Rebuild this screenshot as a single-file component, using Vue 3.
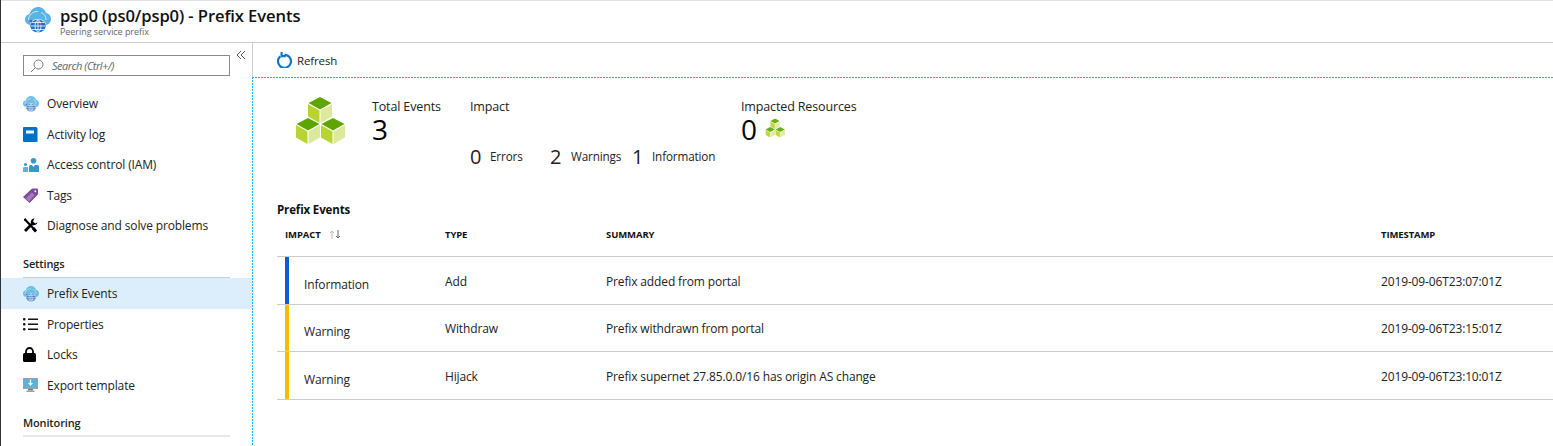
<script setup>
const navTop = [
  { label: 'Overview', icon: 'globe' },
  { label: 'Activity log', icon: 'log' },
  { label: 'Access control (IAM)', icon: 'iam' },
  { label: 'Tags', icon: 'tag' },
  { label: 'Diagnose and solve problems', icon: 'tools' },
]
const navSettings = [
  { label: 'Prefix Events', icon: 'globe', active: true },
  { label: 'Properties', icon: 'props' },
  { label: 'Locks', icon: 'lock' },
  { label: 'Export template', icon: 'export' },
]
const rows = [
  { impact: 'Information', color: '#0a5fd6', type: 'Add', summary: 'Prefix added from portal', ts: '2019-09-06T23:07:01Z' },
  { impact: 'Warning', color: '#ffb900', type: 'Withdraw', summary: 'Prefix withdrawn from portal', ts: '2019-09-06T23:15:01Z' },
  { impact: 'Warning', color: '#ffb900', type: 'Hijack', summary: 'Prefix supernet 27.85.0.0/16 has origin AS change', ts: '2019-09-06T23:10:01Z' },
]
const cubes = [[13, 1], [1, 22], [26, 22]]
</script>

<template>
  <div class="page">
    <svg width="0" height="0" class="defs">
      <symbol id="cube" viewBox="0 0 24 26">
        <path d="M12 0L23.500 6L12 12.500L0.500 6Z" fill="#5ea500" />
        <path d="M0 7L11.500 13.500V26L0 19.500Z" fill="#b8d432" />
        <path d="M24 7L12.500 13.500V26L24 19.500Z" fill="#dde99a" />
      </symbol>
      <symbol id="globe" viewBox="0 0 26 26">
        <path d="M6 18C2.500 18 0 15.500 0 12.500C0 9.500 2 7.500 4.500 7C5.500 3 9 0 13 0C17 0 20 2.500 21 6C24 6.300 26 9 26 12C26 15.500 23.500 18 20 18Z" fill="#59b4e3" />
        <path d="M3.500 13C3.500 8 8 4 13 4.500" stroke="#d4edfa" stroke-width="0.900" fill="none" />
        <path d="M21 13C21 9 19 6.500 16 5.500" stroke="#d4edfa" stroke-width="0.900" fill="none" />
        <ellipse cx="13" cy="19" rx="8.500" ry="7" fill="#fff" />
        <ellipse cx="13" cy="19" rx="7.800" ry="6.400" fill="#1f72c4" />
        <path d="M5.500 19H20.500M13 12.500V25.500M7 15.500H19M7 22.500H19M13 12.500C9 15 9 23 13 25.500M13 12.500C17 15 17 23 13 25.500" stroke="#fff" stroke-width="0.800" fill="none" />
        <circle cx="6" cy="14" r="1.300" fill="#a23d9c" />
        <circle cx="16.500" cy="17" r="1.300" fill="#a23d9c" />
      </symbol>
    </svg>

    <header class="topbar">
      <svg class="res-icon" width="26" height="26"><use href="#globe" /></svg>
      <div class="titles">
        <h1>psp0 (ps0/psp0) - Prefix Events</h1>
        <p>Peering service prefix</p>
      </div>
    </header>

    <div class="body">
      <aside class="side">
        <div class="search-row">
          <div class="search">
            <svg width="14" height="14" viewBox="0 0 14 14" fill="none" stroke="#777" stroke-width="1"><circle cx="8.500" cy="5.500" r="4.500" /><path d="M5.200 8.800L1 13" /></svg>
            <span>Search (Ctrl+/)</span>
          </div>
          <svg class="collapse" width="10" height="10" viewBox="0 0 10 10" fill="none" stroke="#555" stroke-width="1"><path d="M5 1L1 5L5 9M9 1L5 5L9 9" /></svg>
        </div>

        <template v-for="(group, gi) in [navTop, navSettings]" :key="gi">
          <div v-if="gi === 1" class="heading">Settings</div>
          <div v-for="item in group" :key="item.label" class="nav" :class="{ active: item.active, lower: gi === 1 }">
            <span class="nav-icon">
              <svg v-if="item.icon === 'globe'" class="soft" width="16" height="16"><use href="#globe" /></svg>
              <svg v-else-if="item.icon === 'log'" width="15" height="15" viewBox="0 0 15 15"><rect width="14" height="15" rx="1" fill="#0072c6" /><rect x="14" y="1" width="1" height="14" fill="#7ab8e6" /><rect x="3" y="3.500" width="8" height="3" fill="#fff" /></svg>
              <svg v-else-if="item.icon === 'iam'" width="16" height="14" viewBox="0 0 16 14"><circle cx="10.500" cy="2.800" r="2.800" fill="#3999c6" /><path d="M6 14V8.500Q6 7 7.500 7H9L10.500 9L12 7H14.500Q16 7 16 8.500V14Z" fill="#3999c6" /><circle cx="2.500" cy="6.500" r="1.600" fill="#3999c6" /><path d="M0 14V10Q0 9 1.500 9H5V14Z" fill="#59b4d9" /></svg>
              <svg v-else-if="item.icon === 'tag'" width="15" height="15" viewBox="0 0 15 15"><path d="M0 9L8 1.500Q9 0.500 10 0.500H14Q15 0.500 15 1.500V5.500Q15 6.500 14 7.500L6.500 15Z" fill="#7f4a9b" /><path d="M2.500 10.500L9 4.500L11.500 7L6 13.500Z" fill="#a67bb8" /><circle cx="12.300" cy="3.200" r="1" fill="#fff" /></svg>
              <svg v-else-if="item.icon === 'tools'" width="15" height="15" viewBox="0 0 15 15" fill="none"><path d="M1.500 1L12.800 13" stroke="#000" stroke-width="2" /><path d="M10 10L13 13.500" stroke="#000" stroke-width="3" /><path d="M1 1L3 0.500L3.500 2.500L1.500 3Z" fill="#000" /><path d="M2 13L9 6" stroke="#000" stroke-width="2.800" /><path d="M10.500 0.500A3.800 3.800 0 0 0 8 5.500L9.500 7A3.800 3.800 0 0 0 14.500 4.300L12.300 5.500L10 3.500L11.500 0.500Z" fill="#000" /></svg>
              <svg v-else-if="item.icon === 'props'" width="15" height="13" viewBox="0 0 15 13" fill="#111"><rect y="0" width="2.500" height="2.500" rx="1" /><rect y="5" width="2.500" height="2.500" rx="1" /><rect y="10" width="2.500" height="2.500" rx="1" /><rect x="5" y="0.500" width="10" height="1.500" /><rect x="5" y="5.500" width="10" height="1.500" /><rect x="5" y="10.500" width="10" height="1.500" /></svg>
              <svg v-else-if="item.icon === 'lock'" width="13" height="15" viewBox="0 0 13 15"><path d="M3 7V4.500A3.500 3.500 0 0 1 10 4.500V7" fill="none" stroke="#000" stroke-width="1.800" /><rect y="6" width="13" height="9" rx="1.500" fill="#000" /></svg>
              <svg v-else-if="item.icon === 'export'" width="15" height="14" viewBox="0 0 15 14"><rect width="15" height="11" fill="#a0a1a2" /><rect x="1" y="1" width="13" height="8.500" fill="#59b4d9" /><rect x="5" y="11" width="5" height="1.500" fill="#7a7a7a" /><rect x="3.500" y="12.500" width="8" height="1.500" fill="#a0a1a2" /><path d="M6.800 1.500H8.200V5H10L7.500 8L5 5H6.800Z" fill="#fff" /></svg>
            </span>
            <span>{{ item.label }}</span>
          </div>
        </template>

        <div class="heading last">Monitoring</div>
      </aside>

      <main class="main">
        <div class="cmdbar">
          <svg width="16" height="16" viewBox="0 0 16 16" fill="none"><path d="M3.300 4.300A6.500 6.500 0 1 0 7.500 2.800" stroke="#0f77c8" stroke-width="2.200" /><path d="M3.500 0H5.700V3H8.700V5.200H3.500Z" fill="#0f77c8" /></svg>
          <span>Refresh</span>
        </div>

        <section class="content">
          <div class="stats">
            <svg class="hero" width="50" height="49" viewBox="0 0 50 49">
              <use v-for="(c, i) in cubes" :key="i" href="#cube" :x="c[0]" :y="c[1]" width="24" height="26" />
            </svg>
            <div class="stat total">
              <div>Total Events</div>
              <div class="big">3</div>
            </div>
            <div class="stat impact">
              <div>Impact</div>
              <div class="counts">
                <span class="num">0</span><span class="lab errs">Errors</span>
                <span class="num wide">2</span><span class="lab warns">Warnings</span>
                <span class="num">1</span><span class="lab">Information</span>
              </div>
            </div>
            <div class="stat res">
              <div>Impacted Resources</div>
              <div class="res-val">
                <span class="big">0</span>
                <svg class="res-cubes" width="20" height="20" viewBox="0 0 50 49">
                  <use v-for="(c, i) in cubes" :key="i" href="#cube" :x="c[0]" :y="c[1]" width="24" height="26" />
                </svg>
              </div>
            </div>
          </div>

          <h2>Prefix Events</h2>
          <div class="table">
            <div class="thead">
              <span class="impact-h">IMPACT
                <svg width="12" height="9" viewBox="0 0 12 9" fill="none"><path d="M3 9V1M1 3L3 1L5 3" stroke="#bbb" /><path d="M9 0V8M7 6L9 8L11 6" stroke="#666" /></svg>
              </span>
              <span>TYPE</span>
              <span>SUMMARY</span>
              <span>TIMESTAMP</span>
            </div>
            <div v-for="r in rows" :key="r.ts" class="row">
              <span class="impact-c">
                <i class="bar" :style="{ background: r.color }"></i>
                <span class="impact-t">{{ r.impact }}</span>
              </span>
              <span class="cell">{{ r.type }}</span>
              <span class="cell">{{ r.summary }}</span>
              <span class="cell">{{ r.ts }}</span>
            </div>
          </div>
        </section>
      </main>
    </div>
  </div>
</template>

<style>
html, body { margin: 0; background: #fff; overflow: hidden; }
</style>

<style scoped>
.page {
  width: 1553px;
  height: 446px;
  box-sizing: border-box;
  overflow: hidden;
  font-family: "Open Sans", "Noto Sans", sans-serif;
  font-size: 12px;
  letter-spacing: -0.14px;
  color: #222;
  background: #fff;
  border-left: 1px solid #333;
}
.defs { position: absolute; }
.topbar {
  height: 41px;
  border-top: 1px solid #e2e2e2;
  border-bottom: 1px solid #ccc;
  display: flex;
  align-items: center;
  padding-left: 24px;
  gap: 9px;
}
.res-icon { flex: none; margin-top: -3px; }
h1 {
  margin: 0;
  font-size: 16.600px;
  line-height: 20px;
  font-weight: 600;
  color: #111;
  letter-spacing: -0.1px;
}
.titles p { margin: 0; font-size: 9px; line-height: 11px; color: #666; letter-spacing: -0.05px; }
.body { display: flex; height: 403px; }
.side {
  width: 251px;
  flex: none;
  padding-top: 12px;
}
.search-row { display: flex; align-items: flex-start; height: 21px; margin-bottom: 12.500px; padding-left: 22px; }
.search {
  width: 199px;
  height: 19px;
  border: 1px solid #8a8a8a;
  display: flex;
  align-items: center;
  gap: 8px;
  padding-left: 6px;
  font-style: italic;
  color: #666;
  font-size: 11px;
  letter-spacing: -0.5px;
}
.collapse { margin-left: 6px; margin-top: -5px; }
.nav {
  height: 30.500px;
  display: flex;
  align-items: center;
  color: #222;
  padding-left: 22px;
}
.nav.lower { box-sizing: border-box; padding-top: 1px; }
.nav.active { background: #dceefc; }
.nav-icon { width: 24px; display: flex; align-items: center; justify-content: flex-start; }
.soft { opacity: 0.85; }
.heading {
  margin: 13px 22px 0;
  width: 207px;
  height: 23px;
  border-bottom: 1px solid #ccc;
  line-height: 20px;
  font-weight: 600;
  font-size: 11px;
}
.heading.last { margin-top: 13px; border-bottom: 2px solid #e8e8e8; height: 22px; }
.main { flex: 1; min-width: 0; border-left: 1px solid #ccc; }
.cmdbar {
  height: 34px;
  box-sizing: border-box;
  display: flex;
  align-items: center;
  gap: 4px;
  padding-left: 24px;
  font-size: 11.500px;
}
.content {
  height: 369px;
  box-sizing: border-box;
  margin-left: -1px;
  padding: 1px 0 0 25px;
  background-color: #fff;
  background-image:
    repeating-linear-gradient(90deg, #19b5f1 0 2px, transparent 2px 3px),
    repeating-linear-gradient(180deg, #19b5f1 0 2px, transparent 2px 3px);
  background-size: 100% 1px, 1px 100%;
  background-position: 0 0, 0 0;
  background-repeat: no-repeat;
}
.stats { display: flex; height: 118px; padding-top: 18px; box-sizing: border-box; }
.hero { margin-left: 18px; flex: none; }
.stat { line-height: 17px; font-size: 12.500px; padding-top: 2px; }
.total { margin-left: 27px; width: 98px; }
.big { font-size: 28px; line-height: 28px; color: #000; letter-spacing: 0; }
.impact { width: 271px; }
.counts { display: flex; align-items: center; margin-top: 31px; height: 20px; }
.num { font-size: 20px; color: #222; width: 20px; letter-spacing: 0; }
.num.wide { width: 21px; }
.lab { font-size: 11.700px; }
.errs { width: 60px; }
.warns { width: 61px; }
.res-val { display: flex; align-items: center; gap: 8px; }
.res-cubes { margin-top: -3px; opacity: 0.9; }
h2 { margin: 0; font-size: 11.500px; font-weight: 700; line-height: 16px; color: #111; height: 16px; padding-top: 6px; }
.thead, .row {
  display: grid;
  grid-template-columns: 168px 161px 775px 1fr;
}
.thead {
  height: 38px;
  align-items: center;
  font-size: 9.500px;
  font-weight: 700;
  color: #111;
  padding-bottom: 6px;
  box-sizing: border-box;
  letter-spacing: -0.1px;
}
.impact-h { padding-left: 8px; display: flex; align-items: center; gap: 8px; }
.row {
  height: 47.500px;
  border-top: 1px solid #ccc;
  box-sizing: border-box;
  align-items: center;
}
.row:last-child { height: 48.500px; border-bottom: 1px solid #ccc; }
.cell { padding-top: 2px; }
.impact-c { display: flex; align-items: center; height: 100%; padding-left: 8px; }
.bar { width: 4px; height: 100%; display: block; }
.impact-t { margin-left: 15px; padding-top: 8px; }
</style>
